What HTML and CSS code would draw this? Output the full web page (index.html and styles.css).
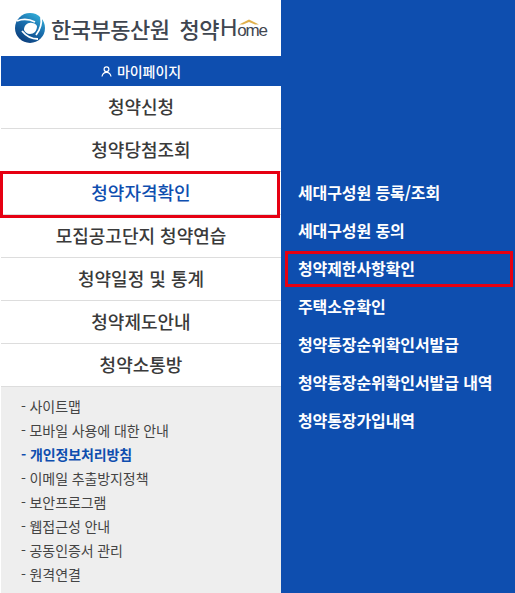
FILE: index.html
```html
<!DOCTYPE html>
<html lang="ko">
<head>
<meta charset="utf-8">
<title>청약Home</title>
<link rel="stylesheet" href="styles.css">
</head>
<body>
<div class="app">
  <aside class="left">
    <header class="logo">
      <svg class="emblem" width="30" height="30" viewBox="0 0 30 30">
        <defs>
          <linearGradient id="ring" x1="0.800" y1="0" x2="0.200" y2="1">
            <stop offset="0" stop-color="#35b4dc"/>
            <stop offset="0.450" stop-color="#1a6fae"/>
            <stop offset="1" stop-color="#0c3a78"/>
          </linearGradient>
        </defs>
        <circle cx="15" cy="15" r="15" fill="url(#ring)"/>
        <path d="M2 8C7 6 14 6 20 9" fill="none" stroke="#fff" stroke-width="1.800"/>
        <path d="M26 4c1 6-1 13-5 18" fill="none" stroke="#fff" stroke-width="1.800"/>
        <path d="M23 26C17 26 11 23 7 18" fill="none" stroke="#fff" stroke-width="1.800"/>
        <path d="M9 17c0-5 4-8 8-7 2 0 4 1 5 3 0 5-3 8-7 8-3 0-5-2-6-4z" fill="#fff"/>
      </svg>
      <span class="brand">한국부동산원</span>
      <span class="brand sub">청약</span>
      <span class="home">H<span class="ome">ome<svg class="roof" width="20" height="6" viewBox="0 0 20 6"><path d="M0 5.500 10 .5l10 5h-4l-6-2.500-6 2.500z" fill="#e0b04c"/></svg></span></span>
    </header>
    <div class="mypage">
      <svg class="person" width="11" height="11" viewBox="0 0 11 11"><circle cx="5.500" cy="3.200" r="2.400" fill="none" stroke="#fff" stroke-width="1.200"/><path d="M1 10.500c.5-3 2.200-4.200 4.500-4.200s4 1.200 4.500 4.200" fill="none" stroke="#fff" stroke-width="1.200"/></svg>
      <span>마이페이지</span>
    </div>
    <nav class="menu">
      <a class="item">청약신청</a>
      <a class="item">청약당첨조회</a>
      <a class="item active">청약자격확인<span class="mark mark-left"></span></a>
      <a class="item">모집공고단지 청약연습</a>
      <a class="item">청약일정 및 통계</a>
      <a class="item">청약제도안내</a>
      <a class="item">청약소통방</a>
    </nav>
    <ul class="links">
      <li>- 사이트맵</li>
      <li>- 모바일 사용에 대한 안내</li>
      <li class="strong">- 개인정보처리방침</li>
      <li>- 이메일 추출방지정책</li>
      <li>- 보안프로그램</li>
      <li>- 웹접근성 안내</li>
      <li>- 공동인증서 관리</li>
      <li>- 원격연결</li>
    </ul>
  </aside>
  <main class="right">
    <a class="sub-item">세대구성원 등록/조회</a>
    <a class="sub-item">세대구성원 동의</a>
    <a class="sub-item">청약제한사항확인<span class="mark mark-right"></span></a>
    <a class="sub-item">주택소유확인</a>
    <a class="sub-item">청약통장순위확인서발급</a>
    <a class="sub-item">청약통장순위확인서발급 내역</a>
    <a class="sub-item">청약통장가입내역</a>
  </main>
</div>
</body>
</html>
```
FILE: styles.css
```css
* { box-sizing: border-box; }
html, body { margin: 0; height: 100%; }
body {
  background: #fff;
  font-family: "Noto Sans CJK KR", "Noto Sans", sans-serif;
  overflow: hidden;
}
.app { display: flex; width: 515px; height: 593px; }
.left { width: 281px; padding-left: 1px; display: flex; flex-direction: column; flex: none; }
.right {
  flex: 1;
  background: #0e4eaf;
  padding-top: 173px;
  display: flex;
  flex-direction: column;
}
.logo {
  height: 56px;
  display: flex;
  align-items: center;
  padding-left: 14px;
  white-space: nowrap;
}
.emblem { flex: none; margin-right: 6px; }
.brand { font-size: 22px; font-weight: 500; letter-spacing: -0.5px; color: #3f4650; }
.sub { margin-left: 10px; }
.home { font-family: "Liberation Sans", sans-serif; font-size: 24px; color: #3f4650; display: flex; align-items: baseline; margin-left: 1px; }
.ome { position: relative; font-size: 17px; letter-spacing: -1.2px; }
.roof { position: absolute; left: 2px; top: -2px; }
.mypage {
  height: 30px;
  background: #0e4eaf;
  color: #fff;
  font-size: 14px;
  font-weight: 500;
  letter-spacing: -0.1px;
  display: flex;
  align-items: center;
  justify-content: center;
  gap: 5px;
}
.menu { display: flex; flex-direction: column; }
.item {
  position: relative;
  height: 43px;
  padding-bottom: 2px;
  display: flex;
  align-items: center;
  justify-content: center;
  font-size: 18px;
  font-weight: 500;
  color: #3a3a3a;
  border-bottom: 1px solid #ddd;
}
.item.active { color: #0e4eaf; }
.mark { position: absolute; border: 3px solid #e60012; pointer-events: none; }
.mark-left { left: -1px; top: -1px; width: 280px; height: 47px; }
.mark-right { left: 4px; top: 2px; width: 228px; height: 36px; }
.links {
  flex: 1;
  list-style: none;
  margin: 0;
  padding: 7px 0 0 20px;
  background: #eee;
  font-size: 14px;
  letter-spacing: -0.1px;
  color: #444;
}
.links li { height: 24px; line-height: 24px; }
.links .strong { color: #0e4eaf; font-weight: 700; }
.sub-item {
  position: relative;
  height: 38px;
  padding-left: 17px;
  display: flex;
  align-items: center;
  color: #fff;
  font-size: 16px;
  font-weight: 700;
  letter-spacing: -0.1px;
  white-space: nowrap;
}
```
